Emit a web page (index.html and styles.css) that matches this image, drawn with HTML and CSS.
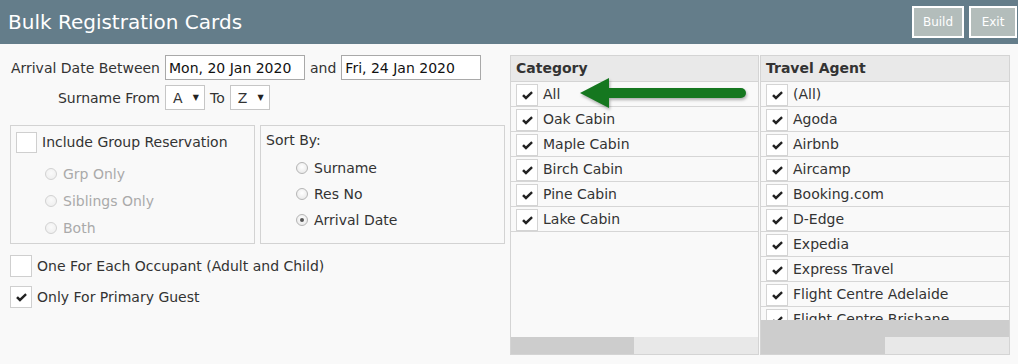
FILE: index.html
```html
<!DOCTYPE html>
<html lang="en">
<head>
<meta charset="utf-8">
<title>Bulk Registration Cards</title>
<link rel="stylesheet" href="styles.css">
</head>
<body>
<header class="topbar">
  <h1 class="title">Bulk Registration Cards</h1>
  <div class="actions">
    <button class="btn btn-build">Build</button>
    <button class="btn btn-exit">Exit</button>
  </div>
</header>

<main class="content">
  <section class="form">
    <div class="row">
      <span class="lbl">Arrival Date Between</span>
      <input class="input" type="text" value="Mon, 20 Jan 2020">
      <span>and</span>
      <input class="input" type="text" value="Fri, 24 Jan 2020">
    </div>
    <div class="row">
      <span class="lbl">Surname From</span>
      <span class="select">A<span class="caret">&#9660;</span></span>
      <span>To</span>
      <span class="select">Z<span class="caret">&#9660;</span></span>
    </div>

    <div class="boxes">
      <div class="box box-group">
        <div class="cb-row">
          <span class="cb cb-sm"></span>
          <span>Include Group Reservation</span>
        </div>
        <div class="radios radios-group">
          <div class="radio-row disabled"><span class="radio"></span><span>Grp Only</span></div>
          <div class="radio-row disabled"><span class="radio"></span><span>Siblings Only</span></div>
          <div class="radio-row disabled"><span class="radio"></span><span>Both</span></div>
        </div>
      </div>
      <div class="box box-sort">
        <div class="sort-title">Sort By:</div>
        <div class="radios radios-sort">
          <div class="radio-row"><span class="radio"></span><span>Surname</span></div>
          <div class="radio-row"><span class="radio"></span><span>Res No</span></div>
          <div class="radio-row"><span class="radio on"></span><span>Arrival Date</span></div>
        </div>
      </div>
    </div>

    <div class="checks">
      <div class="cb-row">
        <span class="cb"></span>
        <span>One For Each Occupant (Adult and Child)</span>
      </div>
      <div class="cb-row">
        <span class="cb"><svg class="tick" viewBox="0 0 12 10"><polygon points="0,5.6 2,3.7 4.3,5.9 10.2,0.2 12,2.1 4.3,9.6"/></svg></span>
        <span>Only For Primary Guest</span>
      </div>
    </div>
  </section>

  <section class="grids">
    <div class="grid grid-cat">
      <div class="grid-head">Category</div>
      <div class="grid-body">
        <div class="grow"><span class="gcb"><svg class="tick" viewBox="0 0 12 10"><polygon points="0,5.6 2,3.7 4.3,5.9 10.2,0.2 12,2.1 4.3,9.6"/></svg></span><span class="gtxt">All</span></div>
        <div class="grow"><span class="gcb"><svg class="tick" viewBox="0 0 12 10"><polygon points="0,5.6 2,3.7 4.3,5.9 10.2,0.2 12,2.1 4.3,9.6"/></svg></span><span class="gtxt">Oak Cabin</span></div>
        <div class="grow"><span class="gcb"><svg class="tick" viewBox="0 0 12 10"><polygon points="0,5.6 2,3.7 4.3,5.9 10.2,0.2 12,2.1 4.3,9.6"/></svg></span><span class="gtxt">Maple Cabin</span></div>
        <div class="grow"><span class="gcb"><svg class="tick" viewBox="0 0 12 10"><polygon points="0,5.6 2,3.7 4.3,5.9 10.2,0.2 12,2.1 4.3,9.6"/></svg></span><span class="gtxt">Birch Cabin</span></div>
        <div class="grow"><span class="gcb"><svg class="tick" viewBox="0 0 12 10"><polygon points="0,5.6 2,3.7 4.3,5.9 10.2,0.2 12,2.1 4.3,9.6"/></svg></span><span class="gtxt">Pine Cabin</span></div>
        <div class="grow"><span class="gcb"><svg class="tick" viewBox="0 0 12 10"><polygon points="0,5.6 2,3.7 4.3,5.9 10.2,0.2 12,2.1 4.3,9.6"/></svg></span><span class="gtxt">Lake Cabin</span></div>
      </div>
      <div class="hscroll"><span class="thumb thumb-cat"></span></div>
    </div>

    <div class="grid grid-ta">
      <div class="grid-head">Travel Agent</div>
      <div class="grid-body">
        <div class="grow"><span class="gcb"><svg class="tick" viewBox="0 0 12 10"><polygon points="0,5.6 2,3.7 4.3,5.9 10.2,0.2 12,2.1 4.3,9.6"/></svg></span><span class="gtxt">(All)</span></div>
        <div class="grow"><span class="gcb"><svg class="tick" viewBox="0 0 12 10"><polygon points="0,5.6 2,3.7 4.3,5.9 10.2,0.2 12,2.1 4.3,9.6"/></svg></span><span class="gtxt">Agoda</span></div>
        <div class="grow"><span class="gcb"><svg class="tick" viewBox="0 0 12 10"><polygon points="0,5.6 2,3.7 4.3,5.9 10.2,0.2 12,2.1 4.3,9.6"/></svg></span><span class="gtxt">Airbnb</span></div>
        <div class="grow"><span class="gcb"><svg class="tick" viewBox="0 0 12 10"><polygon points="0,5.6 2,3.7 4.3,5.9 10.2,0.2 12,2.1 4.3,9.6"/></svg></span><span class="gtxt">Aircamp</span></div>
        <div class="grow"><span class="gcb"><svg class="tick" viewBox="0 0 12 10"><polygon points="0,5.6 2,3.7 4.3,5.9 10.2,0.2 12,2.1 4.3,9.6"/></svg></span><span class="gtxt">Booking.com</span></div>
        <div class="grow"><span class="gcb"><svg class="tick" viewBox="0 0 12 10"><polygon points="0,5.6 2,3.7 4.3,5.9 10.2,0.2 12,2.1 4.3,9.6"/></svg></span><span class="gtxt">D-Edge</span></div>
        <div class="grow"><span class="gcb"><svg class="tick" viewBox="0 0 12 10"><polygon points="0,5.6 2,3.7 4.3,5.9 10.2,0.2 12,2.1 4.3,9.6"/></svg></span><span class="gtxt">Expedia</span></div>
        <div class="grow"><span class="gcb"><svg class="tick" viewBox="0 0 12 10"><polygon points="0,5.6 2,3.7 4.3,5.9 10.2,0.2 12,2.1 4.3,9.6"/></svg></span><span class="gtxt">Express Travel</span></div>
        <div class="grow"><span class="gcb"><svg class="tick" viewBox="0 0 12 10"><polygon points="0,5.6 2,3.7 4.3,5.9 10.2,0.2 12,2.1 4.3,9.6"/></svg></span><span class="gtxt">Flight Centre Adelaide</span></div>
        <div class="grow"><span class="gcb"><svg class="tick" viewBox="0 0 12 10"><polygon points="0,5.6 2,3.7 4.3,5.9 10.2,0.2 12,2.1 4.3,9.6"/></svg></span><span class="gtxt">Flight Centre Brisbane</span></div>
      </div>
      <div class="band"></div>
      <div class="hscroll"><span class="thumb thumb-ta"></span></div>
    </div>
  </section>
</main>

<svg class="arrow" viewBox="0 0 174 36" width="174" height="36">
  <line x1="26" y1="17" x2="163" y2="17" stroke="#15771f" stroke-width="10" stroke-linecap="round"/>
  <polygon points="2,17 31,2 31,32" fill="#15771f"/>
</svg>
</body>
</html>
```

FILE: styles.css
```css
* { box-sizing: border-box; }

body {
  margin: 0;
  background: #f9f9f9;
  font-family: "DejaVu Sans", Verdana, sans-serif;
  font-size: 14px;
  color: #333;
}

/* Header bar */
.topbar {
  height: 44px;
  background: #647d8a;
  display: flex;
  align-items: center;
  justify-content: space-between;
  padding: 0 1px 0 8px;
}
.title {
  margin: 0;
  font-size: 20px;
  font-weight: normal;
  color: #fff;
}
.actions {
  display: flex;
  gap: 5px;
  align-self: flex-start;
  margin-top: 6px;
}
.btn {
  height: 32px;
  padding: 0;
  border: 2px solid #fff;
  background: #b3bdbb;
  color: #fff;
  font-family: "DejaVu Sans", Verdana, sans-serif;
  font-size: 12px;
}
.btn-build { width: 52px; }
.btn-exit { width: 48px; }

/* Main layout */
.content {
  display: flex;
  gap: 5px;
  padding: 11px 0 0 10px;
}
.form { width: 495px; }

.row {
  display: flex;
  align-items: center;
  gap: 5px;
  height: 25px;
}
.row + .row { margin-top: 5px; }
.lbl {
  width: 150px;
  text-align: right;
}
.input {
  width: 140px;
  height: 25px;
  border: 1px solid #a9a9a9;
  background: #fff;
  font-family: "DejaVu Sans", Verdana, sans-serif;
  font-size: 14px;
  color: #111;
  padding: 0 3px;
  margin: 0;
}
.select {
  width: 40px;
  height: 25px;
  border: 1px solid #c6c6c6;
  background: #fff;
  display: flex;
  align-items: center;
  padding-left: 7px;
  color: #333;
}
.caret {
  margin-left: auto;
  margin-right: 5px;
  font-size: 8px;
  color: #222;
}

/* Option boxes */
.boxes {
  display: flex;
  gap: 5px;
  margin-top: 15px;
}
.box {
  width: 245px;
  height: 119px;
  border: 1px solid #d3d3d3;
  padding: 5px 0 0 5px;
}
.cb-row {
  display: flex;
  align-items: center;
  gap: 5px;
  height: 22px;
}
.cb {
  width: 22px;
  height: 22px;
  border: 1px solid #cfcfcf;
  background: #fff;
  display: flex;
  align-items: center;
  justify-content: center;
}
.cb-sm { width: 21px; height: 21px; }
.tick {
  width: 11px;
  height: 9px;
  fill: #222;
}

.radios-group { margin-top: 7px; padding-left: 29px; }
.radios-group .radio-row { height: 27px; }
.sort-title { height: 18px; line-height: 18px; }
.radios-sort { margin-top: 6px; padding-left: 30px; }
.radios-sort .radio-row { height: 26px; }
.radio-row {
  display: flex;
  align-items: center;
  gap: 6px;
}
.radio {
  width: 12px;
  height: 12px;
  border-radius: 50%;
  border: 1px solid #b5b5b5;
  background: radial-gradient(circle at 50% 40%, #fff 0%, #e4e4e4 100%);
  display: flex;
  align-items: center;
  justify-content: center;
}
.radio.on::after {
  content: "";
  width: 4px;
  height: 4px;
  border-radius: 50%;
  background: #555;
}
.disabled { color: #aaa; }
.disabled .radio {
  border-color: #d2d2d2;
  background: radial-gradient(circle at 50% 40%, #fafafa 0%, #ececec 100%);
}

.checks { margin-top: 11px; }
.checks .cb-row + .cb-row { margin-top: 9px; }

/* Grids */
.grids {
  display: flex;
  gap: 1px;
}
.grid {
  height: 300px;
  border: 1px solid #d4d4d4;
  display: flex;
  flex-direction: column;
  background: #f9f9f9;
}
.grid-cat { width: 249px; }
.grid-ta { width: 250px; }
.grid-head {
  height: 26px;
  line-height: 25px;
  border-bottom: 1px solid #d4d4d4;
  background: #e9e9e9;
  font-weight: bold;
  padding-left: 5px;
}
.grid-body {
  flex: 1;
  overflow: hidden;
}
.grow {
  height: 25px;
  border-bottom: 1px solid #d6d6d6;
  display: flex;
  align-items: flex-start;
}
.gcb {
  width: 22px;
  height: 22px;
  margin: 2px 5px 0 5px;
  border: 1px solid #d4d4d4;
  background: #fff;
  display: flex;
  align-items: center;
  justify-content: center;
}
.gtxt {
  align-self: center;
  white-space: nowrap;
}
.band {
  height: 17px;
  background: #cdcdcd;
}
.hscroll {
  height: 17px;
  background: #e8e8e8;
  display: flex;
}
.thumb { background: #cdcdcd; }
.thumb-cat { width: 123px; }
.thumb-ta { width: 124px; }

/* Annotation arrow overlay */
.arrow {
  position: absolute;
  left: 578px;
  top: 76px;
  filter: drop-shadow(1px 2px 1.5px rgba(0, 0, 0, 0.3));
}
```
